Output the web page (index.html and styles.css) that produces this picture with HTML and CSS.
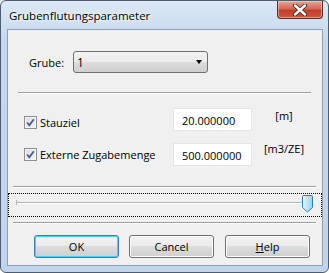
FILE: index.html
```html
<!DOCTYPE html>
<html lang="de">
<head>
  <meta charset="UTF-8">
  <title>Grubenflutungsparameter</title>
  <link rel="stylesheet" href="styles.css">
</head>
<body>
  <div class="window">
    <div class="titlebar">
      <span class="title">Grubenflutungsparameter</span>
      <div class="close">
        <svg width="16" height="12" viewBox="0 0 16 12">
          <path d="M3 1.5 L13 10.5 M13 1.5 L3 10.5" stroke="#3b2a2a" stroke-width="4.2" stroke-linecap="round"/>
          <path d="M3 1.5 L13 10.5 M13 1.5 L3 10.5" stroke="#fff" stroke-width="2.4" stroke-linecap="round"/>
        </svg>
      </div>
    </div>

    <div class="client">
      <div class="grube-row">
        <span class="grube-label">Grube:</span>
        <div class="combo">
          <span class="combo-value">1</span>
          <span class="combo-arrow"></span>
        </div>
      </div>

      <div class="sep sep-short"></div>

      <div class="param-row row-stau">
        <label class="check">
          <span class="box">
            <svg width="11" height="11" viewBox="0 0 11 11"><path d="M2.2 5.6 L4.4 8.3 L8.8 2.2" fill="none" stroke="#4a5c96" stroke-width="1.8"/></svg>
          </span>
          Stauziel
        </label>
        <div class="textbox">20.000000</div>
        <div class="unit">[m]</div>
      </div>

      <div class="param-row row-zugabe">
        <label class="check">
          <span class="box">
            <svg width="11" height="11" viewBox="0 0 11 11"><path d="M2.2 5.6 L4.4 8.3 L8.8 2.2" fill="none" stroke="#4a5c96" stroke-width="1.8"/></svg>
          </span>
          Externe Zugabemenge
        </label>
        <div class="textbox">500.000000</div>
        <div class="unit">[m3/ZE]</div>
      </div>

      <div class="sep sep-2"></div>

      <div class="slider">
        <div class="track"></div>
        <svg class="thumb" width="11" height="18" viewBox="0 0 11 18">
          <defs>
            <linearGradient id="thumbFill" x1="0" y1="0" x2="1" y2="0">
              <stop offset="0" stop-color="#e8f7fe"/>
              <stop offset="1" stop-color="#8fd3f2"/>
            </linearGradient>
          </defs>
          <path d="M1.5 0.5 H9.5 Q10.5 0.5 10.5 1.5 V12.5 L5.5 17 L0.5 12.5 V1.5 Q0.5 0.5 1.5 0.5 Z" fill="url(#thumbFill)" stroke="#2c7fb8"/>
        </svg>
      </div>

      <div class="sep sep-3"></div>

      <div class="buttons">
        <div class="btn btn-default">OK</div>
        <div class="btn">Cancel</div>
        <div class="btn btn-help"><u>H</u>elp</div>
      </div>
    </div>
  </div>
</body>
</html>
```

FILE: styles.css
```css
body { margin:0; font-family:"Open Sans","Noto Sans",sans-serif; font-size:11px; color:#000; background:#fff; }

.window { width:329px; height:273px; box-sizing:border-box; border:1px solid #4d5d70; border-radius:6px;
          background:linear-gradient(#dce8f5, #c4d8ed 40px, #c0d5eb); display:flex; flex-direction:column;
          padding:0 5px 6px 6px; }

.titlebar { height:28px; display:flex; align-items:center; justify-content:space-between; padding-left:2px; }
.title { font-size:11.5px; color:#000; text-shadow:0 0 6px #fff, 0 0 3px #fff; }
.close { align-self:flex-start; width:46px; height:18px; box-sizing:border-box; border:1px solid #5b2b2b; border-top:none;
         border-radius:0 0 4px 4px; background:linear-gradient(#e6a797, #d26a56 45%, #c23e29 55%, #d0553e);
         display:flex; align-items:center; justify-content:center; box-shadow:inset 0 0 0 1px rgba(255,220,210,.5); }

.client { flex:1; border:1px solid #8d9fb6; background:#f0f0f0; display:flex; flex-direction:column; }

.grube-row { display:flex; align-items:center; margin-top:21px; padding-left:21px; height:22px; }
.grube-label { width:44px; }
.combo { width:135px; height:22px; box-sizing:border-box; border:1px solid #707070; border-radius:3px;
         background:linear-gradient(#f2f2f2, #ebebeb 50%, #dddddd 50%, #cfcfcf);
         display:flex; align-items:center; justify-content:space-between; padding:0 5px 0 3px; }
.combo-value { font-size:12px; }
.combo-arrow { width:0; height:0; border-left:3.5px solid transparent; border-right:3.5px solid transparent; border-top:4px solid #000; }

.sep { height:0; border-top:1px solid #a0a0a0; border-bottom:1px solid #fff; margin:0 6px 0 5px; }
.sep-short { margin:19px 11px 0 10px; }
.sep-2 { margin-top:20px; }
.sep-3 { margin-top:5px; }

.param-row { display:flex; align-items:flex-start; height:23px; padding-left:16px; }
.row-stau { margin-top:14px; }
.row-zugabe { margin-top:12px; }
.check { width:149px; display:flex; align-items:center; gap:3px; margin-top:7px; }
.row-zugabe .check { margin-top:4px; }
.box { width:13px; height:13px; box-sizing:border-box; border:1px solid #8e8f8f;
       background:linear-gradient(135deg, #dcdcdc, #f6f6f6); display:flex; align-items:center; justify-content:center;
       box-shadow:inset 0 0 0 1px #f4f4f4; }
.textbox { width:79px; height:23px; box-sizing:border-box; border:1px solid #e2e7ec; background:#fff; padding:4px 0 0 8px; }
.unit { width:64px; text-align:center; margin-top:0; }
.row-zugabe .unit { margin-top:-2px; }

.slider { margin-top:5px; height:24px; box-sizing:border-box; border:1px dotted #000; display:flex; align-items:flex-start;
          padding:1px 8px 0 7px; }
.track { flex:1; height:0; margin-top:7px; border-top:1px solid #b4b4b4; border-bottom:1px solid #fff; position:relative; }
.track::before { content:""; position:absolute; left:0; top:-3px; width:1px; height:5px; background:#b4b4b4; }
.thumb { display:block; }

.buttons { display:flex; gap:10px; margin-top:11px; padding-left:26px; }
.btn { width:85px; height:23px; box-sizing:border-box; border:1px solid #707070; border-radius:3px;
       background:linear-gradient(#f2f2f2, #ebebeb 50%, #dddddd 50%, #cfcfcf);
       box-shadow:inset 0 0 0 1px #fcfcfc; display:flex; align-items:center; justify-content:center; }
.btn-default { border-color:#3c7fb1; box-shadow:inset 0 0 0 1px #48d2fb; }
.btn-help { margin-left:1px; }
```
